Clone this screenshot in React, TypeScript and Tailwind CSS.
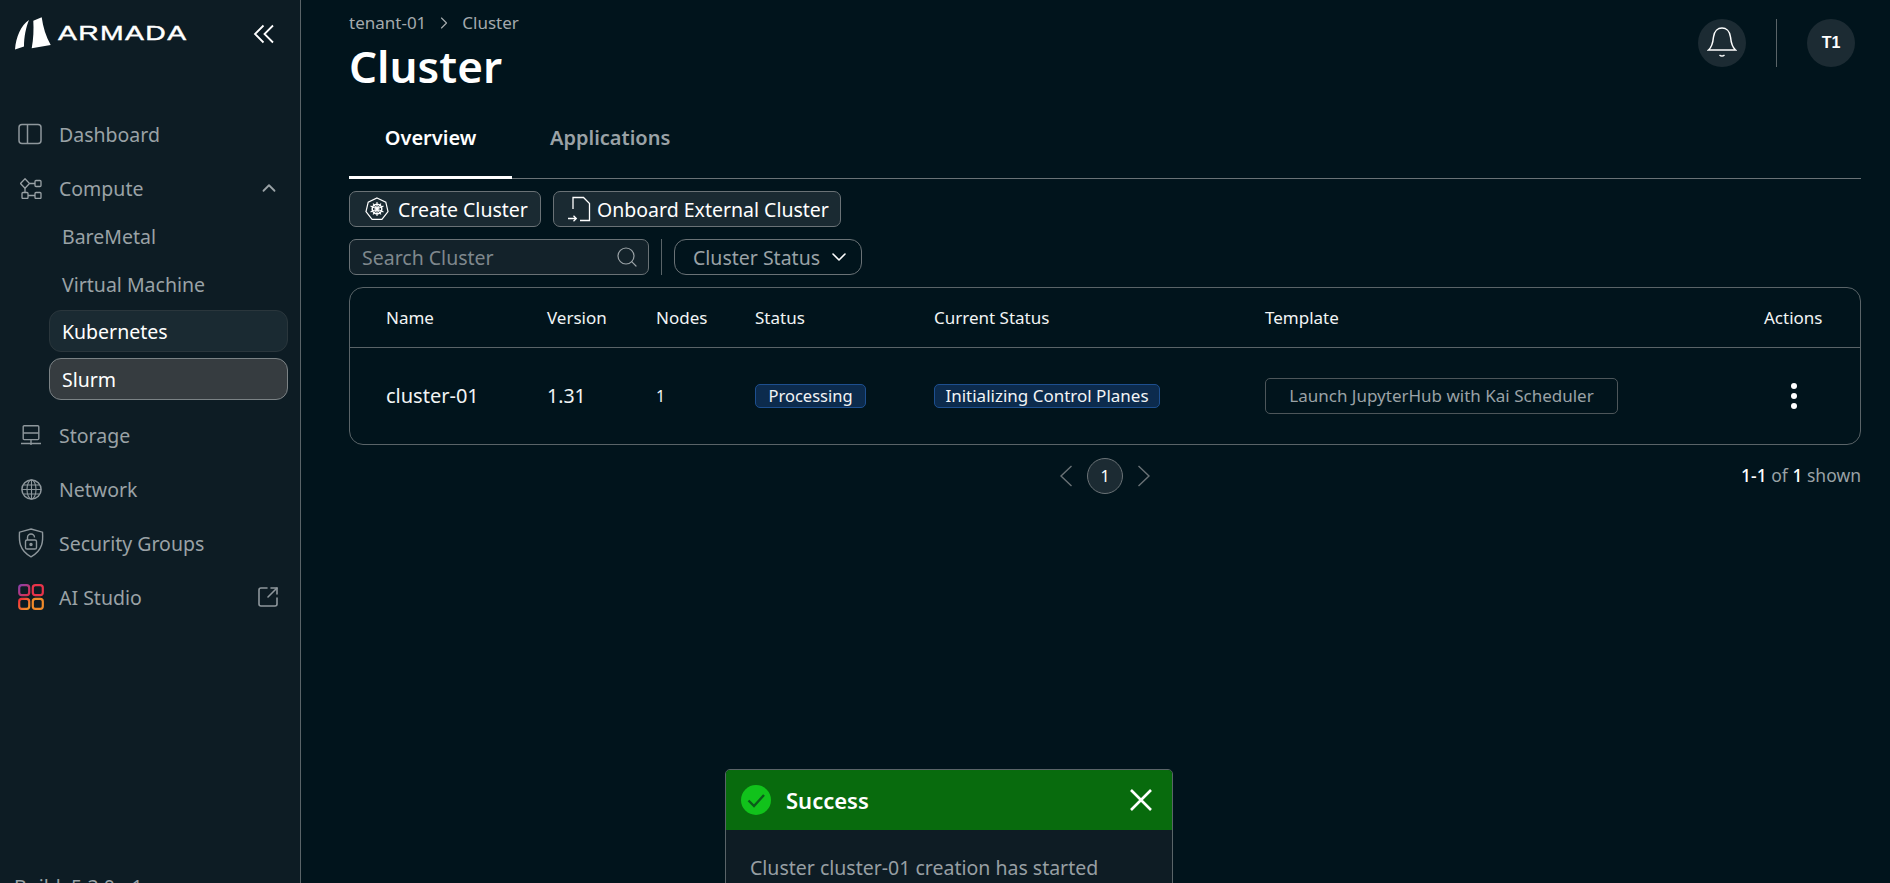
import { ChevronDown, ChevronRight, ChevronUp, Search, SquareArrowOutUpRight } from "lucide-react";

const FONT = "font-['Noto_Sans','Open_Sans',sans-serif]";

// sidebar glyphs, hand-drawn since the packages have no close match
function PanelIcon() {
  return (
    <svg width="24" height="22" viewBox="0 0 24 22" fill="none" stroke="#8e979c" strokeWidth="1.5">
      <rect x="1" y="1.5" width="22" height="19" rx="3" />
      <path d="M9.5 1.5v19" />
    </svg>
  );
}

function ComputeIcon() {
  return (
    <svg className="ml-[2px]" width="22" height="21" viewBox="0 0 22 21" fill="none" stroke="#9aa2a6" strokeWidth="1.3">
      <path d="M5 .8l4.500 4.700L5 10.200.5 5.500z" />
      <rect x="15" y="2.500" width="6" height="6" rx="1" />
      <rect x="2" y="14.500" width="6" height="6" rx="1" />
      <rect x="15" y="14.500" width="6" height="6" rx="1" />
      <path d="M9.500 5.500H15M8 17.500h7M5 10.200v4.300" />
    </svg>
  );
}

function StorageIcon() {
  return (
    <svg className="ml-[3px]" width="20" height="21" viewBox="0 0 20 21" fill="none" stroke="#8e979c" strokeWidth="1.4">
      <rect x="2.200" y=".8" width="15.600" height="13.800" rx="1" />
      <path d="M2.200 8h15.600M10 14.600v5.400M0 18.500h20" />
    </svg>
  );
}

function GlobeIcon() {
  return (
    <svg className="ml-[3px]" width="21" height="21" viewBox="0 0 21 21" fill="none" stroke="#8e979c" strokeWidth="1.1">
      <circle cx="10.500" cy="10.500" r="9.600" strokeWidth="1.500" />
      <ellipse cx="10.500" cy="10.500" rx="4.500" ry="9.600" />
      <path d="M10.500 1v19M1 10.500h19M2.500 6h16M2.500 15h16" />
    </svg>
  );
}

function ShieldIcon() {
  return (
    <svg width="26" height="30" viewBox="0 0 26 30" fill="none" stroke="#8e979c" strokeWidth="1.4">
      <path d="M13 1l11.500 3.200c.6 8 .8 18-11.500 24.600C.8 22.200 1 12.200 1.500 4.200z" />
      <rect x="7.500" y="12" width="11" height="9" rx="1.600" />
      <path d="M9.500 12V9.500a3.500 3.500 0 0 1 7 0" />
      <circle cx="13" cy="16.500" r="1" fill="#8e979c" />
    </svg>
  );
}

function StudioIcon() {
  return (
    <svg width="26" height="26" viewBox="0 0 26 26" fill="none" strokeWidth="2.200">
      <defs>
        <linearGradient id="studio-a" x1="0" y1="0" x2="1" y2="1">
          <stop offset="0%" stopColor="#8a3fa8" />
          <stop offset="100%" stopColor="#e0304a" />
        </linearGradient>
        <linearGradient id="studio-b" x1="0" y1="0" x2="1" y2="1">
          <stop offset="0%" stopColor="#f02b3a" />
          <stop offset="100%" stopColor="#f59a2a" />
        </linearGradient>
      </defs>
      <rect x="1.200" y="1.200" width="10" height="10" rx="2.600" stroke="url(#studio-a)" />
      <rect x="14.800" y="1.200" width="10" height="10" rx="2.600" stroke="#e8344a" />
      <rect x="1.200" y="14.800" width="10" height="10" rx="2.600" stroke="url(#studio-b)" />
      <rect x="14.800" y="14.800" width="10" height="10" rx="2.600" stroke="#f08a2a" />
    </svg>
  );
}

function Logo() {
  return (
    <svg className="shrink-0" width="38" height="34" viewBox="0 0 38 34" fill="#fff">
      <path d="M15 3C7 8 2 20 1 32.500L10 29.500C10 20 12 10 15 3z" />
      <path d="M19.300 3.700L27.700.3C29 10 32 20 36.700 28L17.700 31.300C19.500 22 19.800 12 19.300 3.700z" />
    </svg>
  );
}

function KubeIcon() {
  return (
    <svg width="24" height="24" viewBox="0 0 24 24" fill="none" stroke="#fff" strokeWidth="1.200">
      <path d="M12 1l8.800 4.200 2.200 9.500-6.100 7.600H7.100L1 14.700l2.200-9.500z" />
      <circle cx="12" cy="12" r="4.800" strokeWidth="1.500" />
      <path d="M12 5v14M5.500 9l13 6M18.500 9l-13 6M8 17.500l8-11M16 17.500l-8-11" strokeWidth="1.100" />
    </svg>
  );
}

function OnboardIcon() {
  return (
    <svg width="24" height="26" viewBox="0 0 24 26" fill="none" stroke="#fff" strokeWidth="1.300">
      <path d="M6 13V1.500h10.500L22.500 7.500V24.500H13" />
      <path d="M1 22.500h8M6.500 19.800l2.800 2.700-2.800 2.700" />
    </svg>
  );
}

function NavRow({ icon, label, trailing }: { icon: React.ReactNode; label: string; trailing?: React.ReactNode }) {
  return (
    <div className="flex h-[54px] shrink-0 items-center pl-[18px] pr-[20px]">
      <div className="flex w-[41px] shrink-0 justify-start">{icon}</div>
      <span className="flex-1 pt-[1px] text-[19.5px] text-[#9aa2a6]">{label}</span>
      {trailing}
    </div>
  );
}

function Sidebar() {
  return (
    <aside className="flex h-full w-[301px] shrink-0 flex-col overflow-hidden border-r border-[#5a6468] bg-[#0d1c24]">
      <div className="flex h-[107px] shrink-0 items-start pl-[14px] pr-[25px] pt-[17px]">
        <Logo />
        <span className="ml-[6px] mt-[3px] origin-left font-['Liberation_Sans',sans-serif] text-[21px] leading-[26px] tracking-[1px] text-white [-webkit-text-stroke:0.4px_white] [transform:scaleX(1.35)]">
          ARMADA
        </span>
        <svg className="ml-auto mt-[7px]" width="22" height="20" viewBox="0 0 22 20" fill="none" stroke="#fff" strokeWidth="1.800">
          <path d="M10.500 1.500L2 10l8.500 8.500M20 1.500L11.500 10l8.500 8.500" />
        </svg>
      </div>
      <NavRow icon={<PanelIcon />} label="Dashboard" />
      <NavRow icon={<ComputeIcon />} label="Compute" trailing={<ChevronUp size={22} color="#9aa2a6" />} />
      <div className="-mt-[2px] flex shrink-0 flex-col pl-[49px] pr-[12px]">
        <div className="flex h-[48px] items-center pl-[13px] text-[19.5px] text-[#9aa2a6]">BareMetal</div>
        <div className="flex h-[48px] items-center pl-[13px] text-[19.5px] text-[#9aa2a6]">Virtual Machine</div>
        <div className="mt-[1px] flex h-[42px] items-center rounded-[12px] border border-[#2a363c] bg-[#1a2a32] pl-[12px] pt-[2px] text-[19.5px] text-white">Kubernetes</div>
        <div className="mt-[6px] flex h-[42px] items-center rounded-[12px] border border-[#7b8285] bg-[#363c40] pl-[12px] pt-[2px] text-[19.5px] text-white">Slurm</div>
      </div>
      <div className="mt-[8px] shrink-0">
        <NavRow icon={<StorageIcon />} label="Storage" />
        <NavRow icon={<GlobeIcon />} label="Network" />
        <NavRow icon={<ShieldIcon />} label="Security Groups" />
        <NavRow icon={<StudioIcon />} label="AI Studio" trailing={<SquareArrowOutUpRight size={24} strokeWidth={1.600} color="#8e979c" />} />
      </div>
      <div className="mt-[249px] shrink-0 pl-[14px] text-[19.5px] leading-[28px] text-[#9aa2a6]">Build: 5.3.0 - 1</div>
    </aside>
  );
}

function Table() {
  const cols = "grid grid-cols-[161px_109px_99px_179px_331px_1fr_58px] items-center pl-[36px] pr-[38px]";
  return (
    <div className="mt-[12px] shrink-0 rounded-[14px] border border-[#5a6468]">
      <div className={`${cols} h-[60px] border-b border-[#5a6468] pt-[1px] text-[17px] text-[#f2f4f5]`}>
        <span>Name</span>
        <span>Version</span>
        <span>Nodes</span>
        <span>Status</span>
        <span>Current Status</span>
        <span>Template</span>
        <span>Actions</span>
      </div>
      <div className={`${cols} h-[96px] text-[#f2f4f5]`}>
        <span className="text-[20px]">cluster-01</span>
        <span className="text-[19.5px]">1.31</span>
        <span className="text-[16px]">1</span>
        <span>
          <span className="inline-flex h-[24px] w-[111px] items-center justify-center rounded-[5px] border border-[#1d4f8f] bg-[#0c2b4d] text-[16.5px]">Processing</span>
        </span>
        <span>
          <span className="inline-flex h-[24px] w-[226px] items-center justify-center rounded-[5px] border border-[#1d4f8f] bg-[#0c2b4d] text-[17px]">Initializing Control Planes</span>
        </span>
        <span>
          <span className="inline-flex h-[36px] w-[353px] items-center justify-center rounded-[5px] border border-[#4d565a] text-[17px] text-[#9aa2a6]">Launch JupyterHub with Kai Scheduler</span>
        </span>
        <span className="flex justify-center pl-[1px]">
          <span className="flex flex-col gap-[4px]">
            <span className="h-[6px] w-[6px] rounded-full bg-white" />
            <span className="h-[6px] w-[6px] rounded-full bg-white" />
            <span className="h-[6px] w-[6px] rounded-full bg-white" />
          </span>
        </span>
      </div>
    </div>
  );
}

function Pager() {
  return (
    <div className="relative mt-[13px] flex h-[35px] shrink-0 items-center justify-center">
      <svg width="14" height="22" viewBox="0 0 14 22" fill="none" stroke="#6a7276" strokeWidth="1.400">
        <path d="M12.500 1L2 11l10.500 10" />
      </svg>
      <div className="mx-[14px] flex h-[36px] w-[36px] items-center justify-center rounded-full border border-[#6a7276] bg-[#1c2b33] text-[16px] text-white">1</div>
      <svg width="14" height="22" viewBox="0 0 14 22" fill="none" stroke="#6a7276" strokeWidth="1.400">
        <path d="M1.500 1L12 11 1.500 21" />
      </svg>
      <div className="absolute right-0 text-[17.5px] text-[#9aa2a6]">
        <b className="font-medium text-white">1-1</b> of <b className="font-medium text-white">1</b> shown
      </div>
    </div>
  );
}

function Main() {
  return (
    <main className="flex h-full flex-1 flex-col overflow-hidden bg-[#01141c] pl-[48px] pr-[29px]">
      <header className="flex h-[122px] shrink-0 items-start justify-between">
        <div>
          <div className="mt-[11px] flex items-center text-[17px] leading-[24px] text-[#a4aaad]">
            <span>tenant-01</span>
            <ChevronRight size={20} strokeWidth={1.400} className="mx-[8px]" />
            <span>Cluster</span>
          </div>
          <h1 className="mt-[1px] text-[44px] font-semibold leading-[60px] text-white">Cluster</h1>
        </div>
        <div className="mr-[6px] mt-[19px] flex items-center">
          <div className="flex h-[48px] w-[48px] items-center justify-center rounded-full bg-[#1c2b33]">
            <svg className="mt-[2px]" width="30" height="38" viewBox="0 0 30 38" fill="none" stroke="#fff" strokeWidth="1.500">
              <path d="M1.500 25h27c-3.500-3-4.500-8-5-13C22.800 6 19 3 15 3S7.200 6 6.500 12C6 17 5 22 1.500 25z" />
              <path d="M12.500 30c1.500 1.300 3.500 1.300 5 0" />
            </svg>
          </div>
          <div className="mx-[30px] h-[48px] w-px bg-[#5a6468]" />
          <div className="flex h-[48px] w-[48px] items-center justify-center rounded-full bg-[#1c2b33] font-['Liberation_Sans',sans-serif] text-[16px] font-bold text-white">T1</div>
        </div>
      </header>

      <nav className="flex h-[57px] shrink-0 border-b border-[#6a7276] pt-[1px]">
        <div className="flex h-[56px] w-[163px] justify-center border-b-[3px] border-white text-[20px] font-semibold text-white">Overview</div>
        <div className="ml-[38px] text-[20px] font-semibold text-[#9aa2a6]">Applications</div>
      </nav>

      <div className="mt-[12px] flex shrink-0 gap-[12px]">
        <button className="flex h-[36px] w-[192px] items-center gap-[9px] rounded-[7px] border border-[#6a7276] bg-[#1a2a32] pl-[15px] text-[19.5px] text-white">
          <KubeIcon />
          <span className="pt-[2px]">Create Cluster</span>
        </button>
        <button className="flex h-[36px] w-[288px] items-center gap-[6px] rounded-[7px] border border-[#6a7276] bg-[#1a2a32] pl-[13px] text-[19.5px] text-white">
          <OnboardIcon />
          <span className="pt-[2px]">Onboard External Cluster</span>
        </button>
      </div>

      <div className="mt-[12px] flex h-[36px] shrink-0 items-stretch">
        <div className="flex w-[300px] items-center justify-between rounded-[7px] border border-[#6a7276] bg-[#13222a] pl-[12px] pr-[9px] text-[19.5px] text-[#7f888d]">
          <span className="pt-[2px]">Search Cluster</span>
          <Search size={24} strokeWidth={1.200} color="#9aa2a6" />
        </div>
        <div className="mx-[12px] w-px bg-[#5a6468]" />
        <div className="flex w-[188px] items-center gap-[7px] rounded-[12px] border border-[#6a7276] pl-[18px] text-[19.5px] text-[#9aa2a6]">
          <span className="pt-[2px]">Cluster Status</span>
          <ChevronDown size={24} strokeWidth={1.600} color="#fff" />
        </div>
      </div>

      <Table />
      <Pager />
    </main>
  );
}

function Toast() {
  return (
    <div className="fixed left-[725px] top-[769px] w-[448px] overflow-hidden rounded-t-[5px] border border-[#5a6468] bg-[#0e1c24]">
      <div className="flex h-[60px] items-center bg-[#086b0d] pl-[15px] pr-[19px]">
        <svg width="30" height="30" viewBox="0 0 30 30" fill="none">
          <circle cx="15" cy="15" r="15" fill="#11c21b" />
          <path d="M7.500 15.500l5.500 5.500 10-11" stroke="#0b5c1a" strokeWidth="2.400" />
        </svg>
        <span className="ml-[15px] flex-1 text-[22px] font-semibold text-white">Success</span>
        <svg width="24" height="24" viewBox="0 0 24 24" fill="none" stroke="#fff" strokeWidth="2.600">
          <path d="M2 2l20 20M22 2L2 22" />
        </svg>
      </div>
      <div className="px-[24px] pb-[20px] pt-[23px] text-[19.5px] text-[#979fa3]">Cluster cluster-01 creation has started</div>
    </div>
  );
}

export default function App() {
  return (
    <div className={`flex h-screen w-full overflow-hidden ${FONT}`}>
      <Sidebar />
      <Main />
      <Toast />
    </div>
  );
}
